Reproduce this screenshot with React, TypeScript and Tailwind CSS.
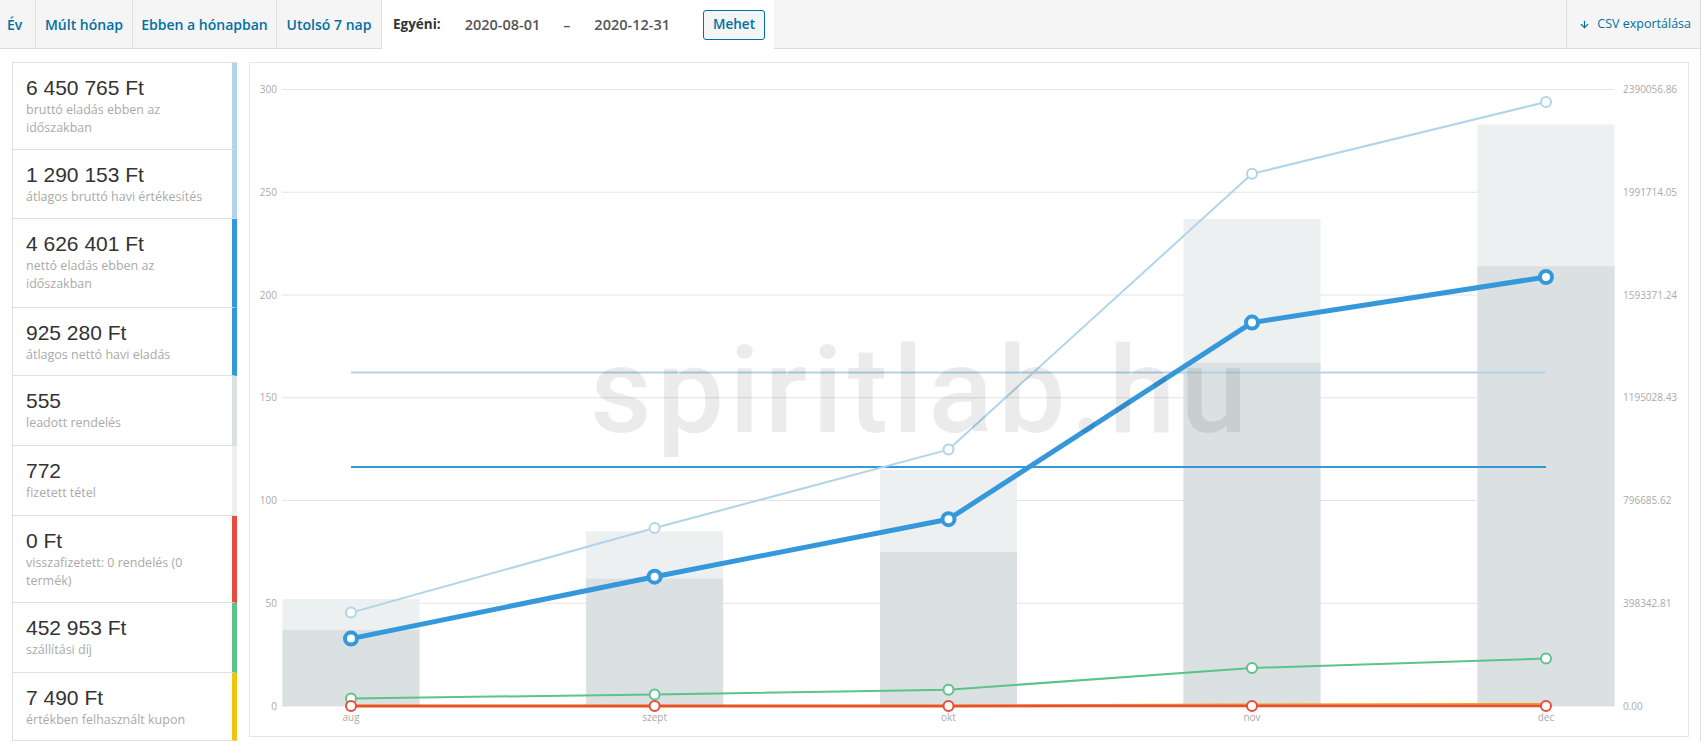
import { ArrowDown } from 'lucide-react'

const legend = [
  { value: '6 450 765 Ft', lines: ['bruttó eladás ebben az', 'időszakban'], cls: 'h-[87px] border-r-[#b1d4ea]' },
  { value: '1 290 153 Ft', lines: ['átlagos bruttó havi értékesítés'], cls: 'h-[69px] border-r-[#b1d4ea]' },
  { value: '4 626 401 Ft', lines: ['nettó eladás ebben az', 'időszakban'], cls: 'h-[89px] border-r-[#3498db]' },
  { value: '925 280 Ft', lines: ['átlagos nettó havi eladás'], cls: 'h-[68px] border-r-[#3498db]' },
  { value: '555', lines: ['leadott rendelés'], cls: 'h-[70px] border-r-[#dbe1e3]' },
  { value: '772', lines: ['fizetett tétel'], cls: 'h-[70px] border-r-[#ecf0f1]' },
  { value: '0 Ft', lines: ['visszafizetett: 0 rendelés (0', 'termék)'], cls: 'h-[87px] border-r-[#e74c3c]' },
  { value: '452 953 Ft', lines: ['szállítási díj'], cls: 'h-[70px] border-r-[#5cc488]' },
  { value: '7 490 Ft', lines: ['értékben felhasznált kupon'], cls: 'h-[68px] border-r-[#f1c40f]' },
]

const tabs = [
  { label: 'Év', width: 'w-[36px]' },
  { label: 'Múlt hónap', width: 'w-[97px]' },
  { label: 'Ebben a hónapban', width: 'w-[144px]' },
  { label: 'Utolsó 7 nap', width: 'w-[105px]' },
]

// chart geometry, in page pixels
const X = [351, 654.6, 948.5, 1252, 1546]
const months = ['aug', 'szept', 'okt', 'nov', 'dec']
const BASE = 706
const STEP = 102.75
const leftTicks = ['0', '50', '100', '150', '200', '250', '300']
const rightTicks = ['0.00', '398342.81', '796685.62', '1195028.43', '1593371.24', '1991714.05', '2390056.86']
const items = [52, 85, 115, 237, 283]
const orders = [37, 62, 75, 167, 214]
const gross = [612.6, 528, 449.6, 173.8, 102]
const net = [638.6, 576.7, 519.2, 322.6, 277]
const shipping = [698.4, 694.5, 689.7, 668, 658.5]
const coupon = [706, 706, 706, 705, 704.5]
const refund = [706, 706, 706, 706, 706]

const toY = (v: number) => BASE - (v * STEP) / 50
const pts = (ys: number[]) => ys.map((y, i) => `${X[i]},${y}`).join(' ')

function Series({ ys, color, width, r, ring }: { ys: number[]; color: string; width: number; r: number; ring: number }) {
  return (
    <g>
      <polyline points={pts(ys)} fill="none" stroke={color} strokeWidth={width} strokeLinejoin="round" />
      {ys.map((y, i) => (
        <circle key={i} cx={X[i]} cy={y} r={r} fill="#fff" stroke={color} strokeWidth={ring} />
      ))}
    </g>
  )
}

function Chart() {
  return (
    <svg width={1438} height={673} viewBox="250 63 1438 673" className="block">
      {leftTicks.map((t, k) => {
        const y = BASE - k * STEP
        return (
          <g key={t}>
            <line x1={282} x2={1614} y1={y} y2={y} stroke="#e3e3e3" strokeWidth={1} />
            <text x={277} y={y + 3.5} textAnchor="end" fontSize={10} fill="#aaa" fontFamily="'Open Sans', sans-serif">{t}</text>
            <text x={1623} y={y + 3.5} fontSize={10} fill="#aaa" fontFamily="'Open Sans', sans-serif">{rightTicks[k]}</text>
          </g>
        )
      })}
      {items.map((v, i) => (
        <rect key={'i' + i} x={X[i] - 68.5} y={toY(v)} width={137} height={BASE - toY(v)} fill="#ecf0f1" />
      ))}
      {orders.map((v, i) => (
        <rect key={'o' + i} x={X[i] - 68.5} y={toY(v)} width={137} height={BASE - toY(v)} fill="#dbe1e3" />
      ))}
      {months.map((m, i) => (
        <text key={m} x={X[i]} y={721} textAnchor="middle" fontSize={10} fill="#aaa" fontFamily="'Open Sans', sans-serif">{m}</text>
      ))}
      <line x1={X[0]} x2={X[4]} y1={372.5} y2={372.5} stroke="#b1d4ea" strokeWidth={2} />
      <line x1={X[0]} x2={X[4]} y1={467} y2={467} stroke="#3498db" strokeWidth={2} />
      <Series ys={shipping} color="#5cc488" width={2} r={5} ring={2} />
      <polyline points={pts(coupon)} fill="none" stroke="#f39c12" strokeWidth={3} />
      <Series ys={refund} color="#e74c3c" width={2.5} r={5} ring={2} />
      <Series ys={gross} color="#b1d4ea" width={2} r={5} ring={2} />
      <Series ys={net} color="#3498db" width={5} r={6} ring={4} />
      <text x={590} y={432} fontSize={120} fontWeight={500} letterSpacing={5} fill="rgba(0,0,0,0.08)" fontFamily="Roboto, sans-serif">spiritlab.hu</text>
    </svg>
  )
}

export default function App() {
  return (
    <div className="w-[1701px] h-[741px] bg-white border-r border-[#dcdcde] font-['Open_Sans',sans-serif] text-[13px] overflow-hidden">
      {/* Range tabs */}
      <div className="flex h-[49px] bg-[#f5f5f5] border-b border-[#dcdcde]">
        {tabs.map((t, i) => (
          <div
            key={t.label}
            className={`flex items-center h-full text-[14px] font-semibold text-[#0071a1] border-r border-[#e1e1e1] ${t.width} ${i === 0 ? 'pl-[7px]' : 'justify-center'}`}
          >
            {t.label}
          </div>
        ))}
        <div className="flex items-center h-[49px] w-[392px] bg-white pl-[11px]">
          <span className="text-[13.5px] font-bold text-[#333]">Egyéni:</span>
          <span className="ml-[24px] text-[14.5px] font-semibold text-[#555]">2020-08-01</span>
          <span className="ml-[23px] text-[14px] font-semibold text-[#555]">–</span>
          <span className="ml-[24px] text-[14.5px] font-semibold text-[#555]">2020-12-31</span>
          <button className="ml-[33px] h-[30px] w-[62px] rounded-[3px] border border-[#0071a1] bg-[#f3f5f6] text-[13.5px] font-semibold text-[#0071a1]">
            Mehet
          </button>
        </div>
        <div className="flex-1" />
        <div className="flex items-center gap-[7px] h-full pl-[12px] pr-[9px] border-l border-[#dcdcde] text-[12.5px] text-[#0071a1]">
          <ArrowDown className="w-[11px] h-[11px]" strokeWidth={2.5} />
          <span>CSV exportálása</span>
        </div>
      </div>

      {/* Body */}
      <div className="flex gap-[12px] pl-[12px] pt-[13px]">
        <ul className="w-[225px] border-l border-t border-[#dfdfdf] bg-white">
          {legend.map((row) => (
            <li key={row.value} className={`border-b border-[#dfdfdf] border-r-[5px] pl-[13px] pr-[8px] pt-[12px] ${row.cls}`}>
              <div className="font-['Liberation_Sans',Arial,sans-serif] text-[21px] leading-[26px] text-[#333]">{row.value}</div>
              {row.lines.map((l) => (
                <div key={l} className="text-[12.5px] leading-[18px] text-[#aaa] whitespace-nowrap">{l}</div>
              ))}
            </li>
          ))}
        </ul>
        <div className="w-[1440px] h-[675px] border border-[#e5e5e5] bg-white">
          <Chart />
        </div>
      </div>
    </div>
  )
}
